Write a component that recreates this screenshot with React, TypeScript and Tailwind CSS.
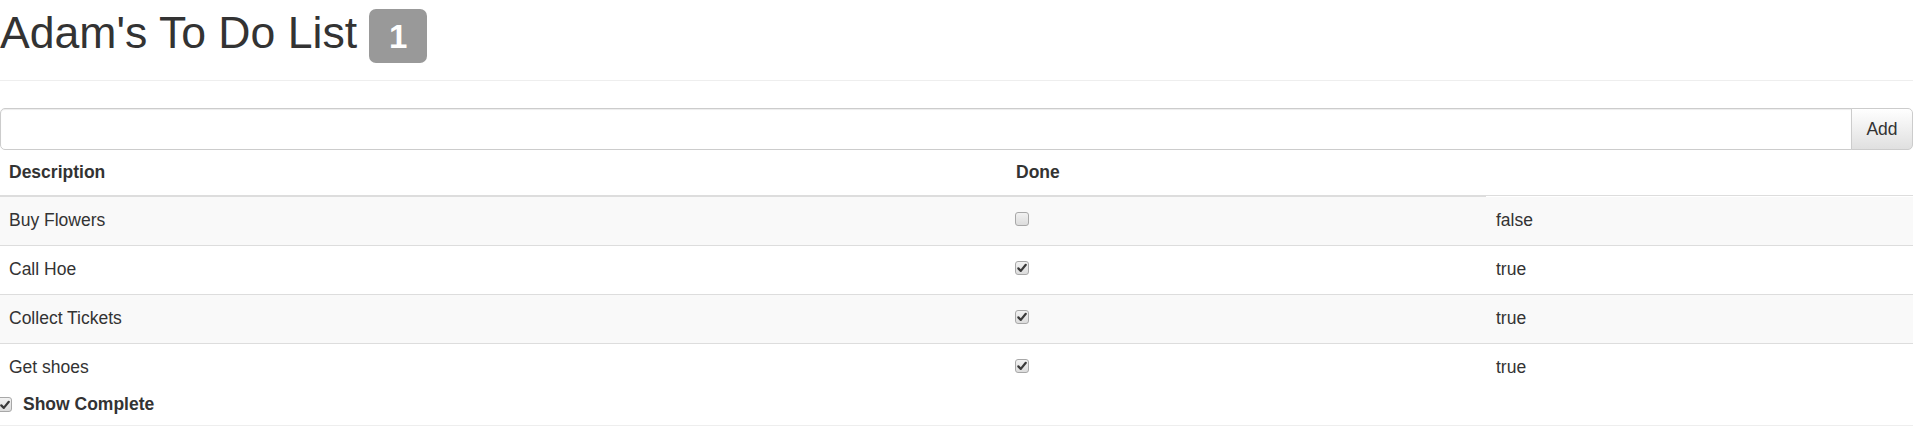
import React from "react";

type Item = { action: string; done: boolean };

const items: Item[] = [
  { action: "Buy Flowers", done: false },
  { action: "Call Hoe", done: true },
  { action: "Collect Tickets", done: true },
  { action: "Get shoes", done: true },
];

// old-style grey checkbox, drawn so it looks like the screenshot
const Check = ({ checked, className = "" }: { checked: boolean; className?: string }) => (
  <span
    className={`inline-flex items-center justify-center w-[14px] h-[14px] rounded-[3px] border border-[#a8a8a8] bg-gradient-to-b from-[#f2f2f2] to-[#dcdcdc] ${className}`}
  >
    {checked && (
      <svg width="12" height="12" viewBox="0 0 12 12">
        <path d="M2.3 6.4 L4.8 8.9 L9.8 2.8" fill="none" stroke="#3a3a3a" strokeWidth="2.2" strokeLinecap="round" strokeLinejoin="round" />
      </svg>
    )}
  </span>
);

const App = () => {
  const incomplete = items.filter((i) => !i.done).length;

  return (
    <div className="w-full h-[445px] bg-white text-[#333] font-['Liberation_Sans',Arial,sans-serif] text-[17.5px] overflow-hidden">
      <div className="flex items-start h-[81px] border-b border-[#eee]">
        <h1 className="pt-[9px] text-[44.6px] leading-[48px] font-normal whitespace-nowrap">Adam's To Do List</h1>
        <span className="ml-[12px] mt-[9px] w-[58px] h-[54px] rounded-[7px] bg-[#999] text-white font-bold text-[33px] leading-none flex items-center justify-center">
          {incomplete}
        </span>
      </div>

      <div className="flex mt-[27px] h-[42px]">
        <input
          type="text"
          className="flex-1 h-full border border-[#ccc] rounded-l-[5px] px-[15px] shadow-[inset_0_1px_1px_rgba(0,0,0,0.075)] outline-none"
        />
        <button className="w-[62px] h-full -ml-px border border-[#ccc] rounded-r-[5px] bg-gradient-to-b from-white to-[#e0e0e0] text-[#333] text-[17.5px]">
          Add
        </button>
      </div>

      <div className="grid grid-cols-[1006px_480px_1fr] h-[47px]">
        <div className="pl-[9px] pt-[10px] leading-[24px] font-bold border-b-2 border-[#ddd]">Description</div>
        <div className="pl-[10px] pt-[10px] leading-[24px] font-bold border-b-2 border-[#ddd]">Done</div>
        <div className="border-b border-[#ddd] mb-px"></div>
      </div>

      {items.map((item, idx) => (
        <div
          key={item.action}
          className={`grid grid-cols-[1006px_480px_1fr] h-[48px] ${idx > 0 ? "border-t border-[#ddd] h-[49px]" : ""} ${idx % 2 === 0 ? "bg-[#f9f9f9]" : "bg-white"}`}
        >
          <div className="pl-[9px] pt-[11px] leading-[24px]">{item.action}</div>
          <div className="pl-[9px] pt-[15px]">
            <Check checked={item.done} className="align-top" />
          </div>
          <div className="pl-[10px] pt-[11px] leading-[24px]">{item.done ? "true" : "false"}</div>
        </div>
      ))}

      <div className="flex items-start h-[34px] border-b border-[#eee]">
        <Check checked={true} className="-ml-[3px] mt-[5px] w-[15px] h-[15px]" />
        <span className="ml-[11px] leading-[24px] font-bold">Show Complete</span>
      </div>
    </div>
  );
};

export default App;
